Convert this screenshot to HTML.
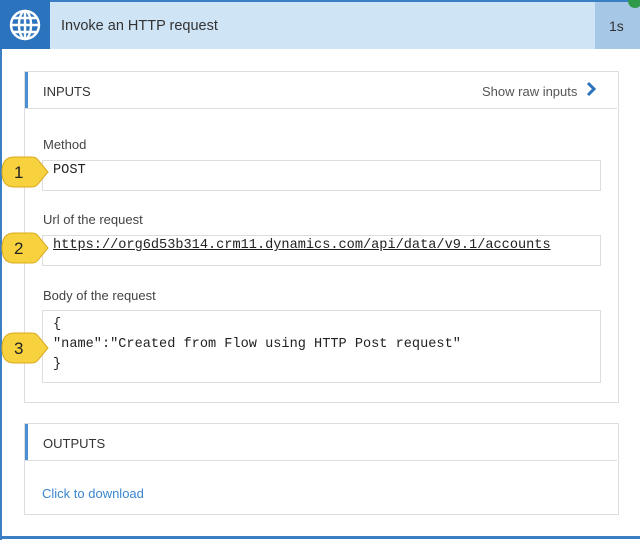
<!DOCTYPE html>
<html><head><style>
body{margin:0;width:640px;height:540px;background:#fff;font-family:"Liberation Sans",sans-serif;position:relative;overflow:hidden;color:#333}
.a{position:absolute}
.mono{font-family:"Liberation Mono",monospace;font-size:13.6px;color:#222}
.lbl{font-size:13px;color:#444}
.box{border:1px solid #ddd;background:#fff}
.card{border:1px solid #ddd;background:#fff}
.badge{position:absolute;left:1px;width:48px;height:32px}
</style></head><body>
<div class="a" style="left:0;top:0;width:2px;height:540px;background:#3a7fc4"></div>
<div class="a" style="left:0;top:536px;width:640px;height:3px;background:#3a7fc4"></div>
<div class="a" style="left:0;top:0;width:640px;height:2px;background:#3a7fc4"></div>
<div class="a" style="left:0;top:2px;width:640px;height:47px;background:#cfe4f5"></div>
<div class="a" style="left:0;top:0;width:50px;height:49px;background:#2c73bd"></div>
<svg class="a" style="left:8px;top:8px" width="34" height="34" viewBox="0 0 34 34" fill="none" stroke="#fff" stroke-width="2.4"><circle cx="17" cy="17" r="14"/><ellipse cx="17" cy="17" rx="6" ry="14"/><line x1="3" y1="17" x2="31" y2="17"/><line x1="5" y1="10" x2="29" y2="10"/><line x1="5" y1="24" x2="29" y2="24"/><line x1="17" y1="3" x2="17" y2="31"/></svg>
<div class="a" style="left:61px;top:18px;font-size:14.5px;color:#333">Invoke an HTTP request</div>
<div class="a" style="left:595px;top:2px;width:45px;height:47px;background:#a7c7e6"></div>
<div class="a" style="left:609px;top:18px;font-size:14px;color:#333">1s</div>
<div class="a" style="left:628px;top:-6px;width:14px;height:14px;border-radius:50%;background:#2e9a4a"></div>

<div class="a card" style="left:24px;top:71px;width:593px;height:330px"></div>
<div class="a" style="left:25px;top:108px;width:592px;height:1px;background:#ddd"></div>
<div class="a" style="left:25px;top:72px;width:3px;height:36px;background:#4a90d2"></div>
<div class="a lbl" style="left:43px;top:84px;color:#333">INPUTS</div>
<div class="a" style="left:482px;top:84px;font-size:13px;color:#555">Show raw inputs</div>
<svg class="a" style="left:585px;top:81px" width="12" height="16" viewBox="0 0 12 16"><path d="M3 2 L9 8 L3 14" fill="none" stroke="#2c73bd" stroke-width="3"/></svg>

<div class="a lbl" style="left:43px;top:137px">Method</div>
<div class="a box" style="left:42px;top:160px;width:557px;height:29px"></div>
<div class="a mono" style="left:53px;top:163px">POST</div>

<div class="a lbl" style="left:43px;top:212px">Url of the request</div>
<div class="a box" style="left:42px;top:235px;width:557px;height:29px"></div>
<div class="a mono" style="left:53px;top:238px;text-decoration:underline">https://org6d53b314.crm11.dynamics.com/api/data/v9.1/accounts</div>

<div class="a lbl" style="left:43px;top:288px">Body of the request</div>
<div class="a box" style="left:42px;top:310px;width:557px;height:71px"></div>
<div class="a mono" style="left:53px;top:315px;line-height:20px">{<br>"name":"Created from Flow using HTTP Post request"<br>}</div>

<div class="a card" style="left:24px;top:423px;width:593px;height:90px"></div>
<div class="a" style="left:25px;top:460px;width:592px;height:1px;background:#ddd"></div>
<div class="a" style="left:25px;top:424px;width:3px;height:36px;background:#4a90d2"></div>
<div class="a lbl" style="left:43px;top:436px;color:#333">OUTPUTS</div>
<div class="a" style="left:42px;top:486px;font-size:13px;color:#3a86cf">Click to download</div>

<svg class="badge" style="top:156px" viewBox="0 0 48 32"><path d="M13 1 H31 Q35 1 37 4 L47 16 L37 28 Q35 31 31 31 H13 Q1 31 1 16 Q1 1 13 1Z" fill="#f7d23e" stroke="#d8a91c"/><text x="13" y="22" font-family="Liberation Sans" font-size="17" fill="#222">1</text></svg>
<svg class="badge" style="top:232px" viewBox="0 0 48 32"><path d="M13 1 H31 Q35 1 37 4 L47 16 L37 28 Q35 31 31 31 H13 Q1 31 1 16 Q1 1 13 1Z" fill="#f7d23e" stroke="#d8a91c"/><text x="13" y="22" font-family="Liberation Sans" font-size="17" fill="#222">2</text></svg>
<svg class="badge" style="top:332px" viewBox="0 0 48 32"><path d="M13 1 H31 Q35 1 37 4 L47 16 L37 28 Q35 31 31 31 H13 Q1 31 1 16 Q1 1 13 1Z" fill="#f7d23e" stroke="#d8a91c"/><text x="13" y="22" font-family="Liberation Sans" font-size="17" fill="#222">3</text></svg>
</body></html>
